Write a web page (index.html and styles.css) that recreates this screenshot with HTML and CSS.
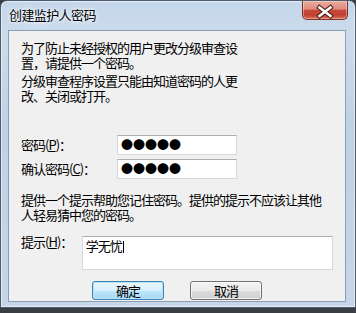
FILE: index.html
```html
<!DOCTYPE html>
<html lang="zh-CN">
<head>
    <meta charset="UTF-8">
    <title>创建监护人密码</title>
    <link rel="stylesheet" href="styles.css">
</head>
<body>
    <div class="window">
        <div class="titlebar">
            <span class="title">创建监护人密码</span>
            <button class="close" aria-label="关闭">
                <svg width="44" height="17" viewBox="0 0 44 17">
                    <path d="M16.5 5.5 L27.5 14 M27.5 5.5 L16.5 14" stroke="#4b1c16" stroke-width="4.6" stroke-linecap="square"/>
                    <path d="M16.5 5.5 L27.5 14 M27.5 5.5 L16.5 14" stroke="#ffffff" stroke-width="2.6" stroke-linecap="square"/>
                </svg>
            </button>
        </div>

        <div class="client">
            <p class="note narrow first">为了防止未经授权的用户更改分级审查设置，请提供一个密码。</p>
            <p class="note narrow">分级审查程序设置只能由知道密码的人更改、关闭或打开。</p>

            <div class="field pwd-first">
                <label class="pwd-label">密码(<u>P</u>)：</label>
                <div class="textbox pwd">●●●●●</div>
            </div>
            <div class="field pwd-second">
                <label class="pwd-label">确认密码(<u>C</u>)：</label>
                <div class="textbox pwd">●●●●●</div>
            </div>

            <p class="note wide">提供一个提示帮助您记住密码。提供的提示不应该让其他人轻易猜中您的密码。</p>

            <div class="field hint-row">
                <label class="hint-label">提示(<u>H</u>)：</label>
                <div class="textbox hint">学无忧<span class="caret"></span></div>
            </div>

            <div class="buttons">
                <button class="btn default">确定</button>
                <button class="btn">取消</button>
            </div>
        </div>
    </div>
</body>
</html>
```

FILE: styles.css
```css
body {
    margin: 0;
    background: #3b3f45;
    font-family: "Noto Sans CJK SC", "Liberation Sans", sans-serif;
    font-size: 13px;
    letter-spacing: -1px;
    color: #000;
}

.window {
    width: 356px;
    height: 308px;
    box-sizing: border-box;
    border: 1px solid #4d5b6c;
    border-radius: 7px 7px 0 0;
    background: linear-gradient(180deg, #c4d6ea 0%, #cddcec 12%, #bfd1e5 40%, #c6d6e8 100%);
    box-shadow: inset 0 0 0 1px rgba(255, 255, 255, 0.55);
    padding: 0 9px 5px 7px;
    display: flex;
    flex-direction: column;
}

.titlebar {
    height: 29px;
    display: flex;
    align-items: flex-start;
}

.title {
    margin: 6px 0 0 1px;
    line-height: 16px;
    letter-spacing: -0.6px;
    text-shadow: 0 0 6px #fff, 0 0 3px #fff;
}

.close {
    margin: 0 -2px 0 auto;
    width: 46px;
    height: 19px;
    padding: 0;
    border: 1px solid #7e322a;
    border-top: none;
    border-radius: 0 0 5px 5px;
    background: linear-gradient(180deg, #e9ab9e 0%, #de8d7d 45%, #c6473a 52%, #c24130 78%, #d8705a 100%);
    box-shadow: inset 0 0 0 1px rgba(255, 255, 255, 0.35);
    display: flex;
    align-items: center;
    justify-content: center;
}

.client {
    flex: 1;
    border: 1px solid #8b9fb4;
    background: #f0f0f0;
    padding: 9px 12px 0 12px;
}

.note {
    margin: 3px 0 0;
    line-height: 15px;
}

.note.first {
    margin-top: 0;
}

.narrow {
    width: 220px;
}

.wide {
    width: 305px;
    margin-top: 13px;
}

.field {
    display: flex;
    align-items: center;
}

.pwd-first {
    margin-top: 32px;
}

.pwd-second {
    margin-top: 4px;
}

.pwd-label {
    width: 96px;
    line-height: 15px;
    margin-top: -2px;
}

.hint-row {
    margin-top: 14px;
    align-items: flex-start;
}

.hint-label {
    width: 62px;
    line-height: 15px;
    margin-top: -2px;
}

.textbox {
    box-sizing: border-box;
    background: #fff;
    border: 1px solid #d5d8dc;
    border-top-color: #abadb3;
}

.pwd {
    width: 120px;
    height: 20px;
    padding: 0 3px;
    line-height: 18px;
    font-size: 12px;
    letter-spacing: 0;
}

.hint {
    width: 256px;
    height: 34px;
    padding: 1px 3px;
    line-height: 15px;
}

.caret {
    display: inline-block;
    width: 1px;
    height: 12px;
    margin-left: 1px;
    background: #000;
    vertical-align: -2px;
}

.buttons {
    margin-top: 11px;
    display: flex;
    justify-content: center;
    gap: 26px;
}

.btn {
    width: 72px;
    height: 19px;
    padding: 0;
    font-family: inherit;
    font-size: 13px;
    letter-spacing: -1px;
    line-height: 17px;
    color: #000;
    border: 1px solid #707070;
    border-radius: 3px;
    background: linear-gradient(180deg, #f2f2f2 0%, #ebebeb 50%, #dddddd 51%, #cfcfcf 100%);
    box-shadow: inset 0 0 0 1px rgba(255, 255, 255, 0.7);
}

.btn.default {
    border-color: #3c7fb1;
    background: linear-gradient(180deg, #eaf6fd 0%, #d9f0fc 50%, #bee6fd 51%, #a7d9f5 100%);
    box-shadow: inset 0 0 0 1px #b6e6f9;
}
```
